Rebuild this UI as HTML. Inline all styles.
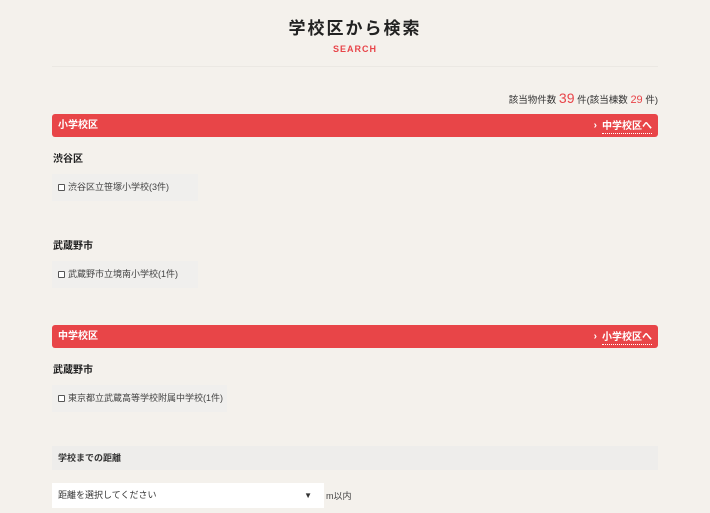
<!DOCTYPE html>
<html><head><meta charset="utf-8"><style>
*{margin:0;padding:0;box-sizing:border-box}
body{width:710px;height:513px;overflow:hidden;background:#f4f1ec;font-family:"Liberation Sans","Noto Sans CJK JP",sans-serif;color:#333;position:relative}
.a{position:absolute}
h1{position:absolute;top:14px;left:0;width:710px;text-align:center;font-size:17px;font-weight:bold;letter-spacing:2px;color:#222}
.s{top:44px;left:0;width:710px;text-align:center;font-size:9px;color:#e8454a;letter-spacing:1px;font-weight:bold}
.bar{left:52px;width:606px;height:23px;background:#e84548;border-radius:3px;color:#fff;font-size:10px;font-weight:bold;line-height:23px;padding:0 6px}
.bar span{float:right;border-bottom:1px dotted #fff;line-height:13px;margin-top:6px}
.bar i{float:right;font-style:normal;margin-right:5px}
.h{left:53px;font-size:10px;font-weight:bold;color:#222}
.box{left:52px;height:27px;background:#f0efed;font-size:9px;line-height:27px;padding-left:6px;color:#444}
.box b{display:inline-block;width:7px;height:7px;border:1px solid #555;border-radius:1px;margin-right:3px;vertical-align:-1px;background:#fff}
</style></head><body>
<h1>学校区から検索</h1>
<div class="a s">SEARCH</div>
<div class="a" style="left:52px;top:66px;width:606px;height:1px;background:#ebe8e3"></div>
<div class="a" style="right:52px;top:90px;font-size:9.5px;color:#333">該当物件数 <span style="color:#e8454a;font-size:14px">39</span> 件(該当棟数 <span style="color:#e8454a;font-size:11px">29</span> 件)</div>
<div class="a bar" style="top:114px">小学校区<span>中学校区へ</span><i>›</i></div>
<div class="a h" style="top:150px">渋谷区</div>
<div class="a box" style="top:174px;width:146px"><b></b>渋谷区立笹塚小学校(3件)</div>
<div class="a h" style="top:237px">武蔵野市</div>
<div class="a box" style="top:261px;width:146px"><b></b>武蔵野市立境南小学校(1件)</div>
<div class="a bar" style="top:325px">中学校区<span>小学校区へ</span><i>›</i></div>
<div class="a h" style="top:361px">武蔵野市</div>
<div class="a box" style="top:385px;width:175px"><b></b>東京都立武蔵高等学校附属中学校(1件)</div>
<div class="a" style="left:52px;top:446px;width:606px;height:24px;background:#eeedeb;font-size:9px;font-weight:bold;line-height:24px;padding-left:6px;color:#333">学校までの距離</div>
<div class="a" style="left:52px;top:483px;width:272px;height:25px;background:#fff;font-size:9px;line-height:25px;padding-left:6px;color:#333">距離を選択してください<span style="position:absolute;right:12px;font-size:8px">▼</span></div>
<div class="a" style="left:326px;top:489px;font-size:9px;color:#444">m以内</div>
</body></html>
